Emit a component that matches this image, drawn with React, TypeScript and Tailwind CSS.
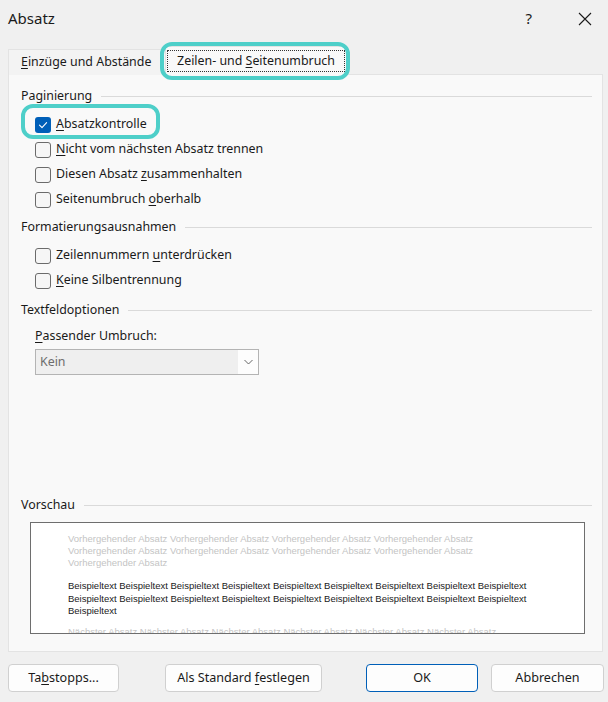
import React from "react";

const U = ({ children }: { children: React.ReactNode }) => <span className="underline underline-offset-2">{children}</span>;

function GroupHeading({ label, className = "" }: { label: string; className?: string }) {
  return (
    <div className={`flex items-center h-[20px] pl-[12px] pr-[10px] ${className}`}>
      <span className="text-[12.4px] text-[#1a1a1a] whitespace-nowrap">{label}</span>
      <div className="flex-1 h-px bg-[#dadada] ml-[9px]" />
    </div>
  );
}

function Checkbox({ checked = false, children }: { checked?: boolean; children: React.ReactNode }) {
  return (
    <div className="flex items-center h-[25px] pl-[26px]">
      {checked ? (
        <div className="w-[16px] h-[16px] rounded-[3px] bg-[#005fb8] flex items-center justify-center">
          <svg width="10" height="10" viewBox="0 0 10 10" fill="none">
            <path d="M1.5 5.2 L4 7.6 L8.6 2.6" stroke="white" strokeWidth="1.1" strokeLinecap="round" strokeLinejoin="round" />
          </svg>
        </div>
      ) : (
        <div className="w-[16px] h-[16px] rounded-[3px] border border-[#6b6b6b] bg-[#f6f6f6]" />
      )}
      <span className="ml-[5px] text-[12.4px] text-[#1a1a1a] whitespace-nowrap">{children}</span>
    </div>
  );
}

function Button({ children, primary = false, className = "" }: { children: React.ReactNode; primary?: boolean; className?: string }) {
  return (
    <div
      className={`h-[28px] rounded-[4px] bg-[#fdfdfd] flex items-center justify-center text-[12.6px] text-[#1a1a1a] whitespace-nowrap ${
        primary ? "border border-[#005fb8]" : "border border-[#d0d0d0]"
      } ${className}`}
    >
      {children}
    </div>
  );
}

export default function App() {
  const prev = "Vorhergehender Absatz Vorhergehender Absatz Vorhergehender Absatz Vorhergehender Absatz";
  const bsp = "Beispieltext Beispieltext Beispieltext Beispieltext Beispieltext Beispieltext Beispieltext Beispieltext Beispieltext";
  const next = "Nächster Absatz Nächster Absatz Nächster Absatz Nächster Absatz Nächster Absatz Nächster Absatz";
  return (
    <div
      className="relative w-[608px] h-[702px] bg-[#f0f0f0] overflow-hidden flex flex-col"
      style={{ fontFamily: '"Noto Sans", "Open Sans", sans-serif' }}
    >
      {/* Title bar */}
      <div className="h-[37px] flex items-center pl-[8px] shrink-0">
        <span className="text-[15px] text-[#1a1a1a]">Absatz</span>
        <span className="ml-auto text-[15px] text-[#1a1a1a] mr-[46px]">?</span>
        <svg width="14" height="14" viewBox="0 0 14 14" className="mr-[16px]">
          <path d="M1 1 L13 13 M13 1 L1 13" stroke="#1a1a1a" strokeWidth="1.1" />
        </svg>
      </div>

      {/* Tabs */}
      <div className="flex items-end h-[37px] pl-[8px] shrink-0 relative z-10">
        <div className="h-[26px] w-[157px] border-t border-l border-[#e3e3e3] bg-[#f3f3f3] flex items-center pl-[12px] text-[12.4px] text-[#1a1a1a] whitespace-nowrap mb-[-1px]">
          <span><U>E</U>inzüge und Abstände</span>
        </div>
        <div className="h-[29px] w-[182px] border-t border-l border-r border-[#e3e3e3] bg-[#f9f9f9] flex items-center justify-center mb-[-1px]">
          <div className="border border-dotted border-[#333] px-[9px] h-[22px] flex items-center text-[12.4px] text-[#1a1a1a] whitespace-nowrap">
            <span>Zeilen- und <U>S</U>eitenumbruch</span>
          </div>
        </div>
      </div>

      {/* Panel */}
      <div className="ml-[8px] w-[595px] h-[578px] bg-[#f9f9f9] border border-[#e3e3e3] flex flex-col shrink-0">
        <GroupHeading label="Paginierung" className="mt-[11px]" />
        <div className="mt-[6px]">
          <Checkbox checked><U>A</U>bsatzkontrolle</Checkbox>
          <Checkbox><U>N</U>icht vom nächsten Absatz trennen</Checkbox>
          <Checkbox>Diesen Absatz <U>z</U>usammenhalten</Checkbox>
          <Checkbox>Seitenumbruch <U>o</U>berhalb</Checkbox>
        </div>
        <GroupHeading label="Formatierungsausnahmen" className="mt-[5px]" />
        <div className="mt-[6px]">
          <Checkbox>Zeilennummern <U>u</U>nterdrücken</Checkbox>
          <Checkbox><U>K</U>eine Silbentrennung</Checkbox>
        </div>
        <GroupHeading label="Textfeldoptionen" className="mt-[7px]" />
        <div className="pl-[26px] mt-[7px] h-[18px] flex items-center text-[12.4px] text-[#1a1a1a]">
          <span><U>P</U>assender Umbruch:</span>
        </div>
        <div className="ml-[26px] mt-[4px] w-[224px] h-[26px] border border-[#b4b4b4] bg-[#efefef] flex items-stretch">
          <div className="flex-1 flex items-center pl-[4px] text-[12.4px] text-[#6d6d6d]">Kein</div>
          <div className="w-[20px] bg-[#fdfdfd] flex items-center justify-center">
            <svg width="9" height="6" viewBox="0 0 9 6">
              <path d="M0.5 1 L4.5 5 L8.5 1" stroke="#555" strokeWidth="0.9" fill="none" />
            </svg>
          </div>
        </div>

        <GroupHeading label="Vorschau" className="mt-[120px]" />
        <div className="ml-[21px] mt-[7px] w-[555px] h-[112px] border border-[#6e6e6e] bg-white overflow-hidden pl-[37px] pt-[10px]"
          style={{ fontFamily: '"Liberation Sans", Arial, sans-serif' }}>
          <div className="text-[9.5px] leading-[12px] text-[#c4c4c4] whitespace-nowrap">
            <div>{prev}</div>
            <div>{prev}</div>
            <div>Vorhergehender Absatz</div>
          </div>
          <div className="mt-[11px] text-[9.5px] leading-[12.5px] text-[#1a1a1a] whitespace-nowrap">
            <div>{bsp}</div>
            <div>{bsp}</div>
            <div>Beispieltext</div>
          </div>
          <div className="mt-[8px] text-[9.5px] leading-[12px] text-[#c4c4c4] whitespace-nowrap">
            <div>{next}</div>
          </div>
        </div>
      </div>

      {/* Buttons */}
      <div className="flex items-center mt-[12px] pl-[8px]">
        <Button className="w-[111px]"><span>Ta<U>b</U>stopps...</span></Button>
        <Button className="w-[157px] ml-[46px]"><span>Als Standard <U>f</U>estlegen</span></Button>
        <Button primary className="w-[112px] ml-[44px]">OK</Button>
        <Button className="w-[113px] ml-[13px]">Abbrechen</Button>
      </div>

      {/* Highlight rings (annotations) */}
      <div className="absolute left-[160px] top-[42px] w-[190px] h-[38px] border-[4px] border-[#4ecfc9] rounded-[12px] pointer-events-none z-20" />
      <div className="absolute left-[21px] top-[104px] w-[139px] h-[35px] border-[4px] border-[#4ecfc9] rounded-[12px] pointer-events-none z-20" />
    </div>
  );
}
